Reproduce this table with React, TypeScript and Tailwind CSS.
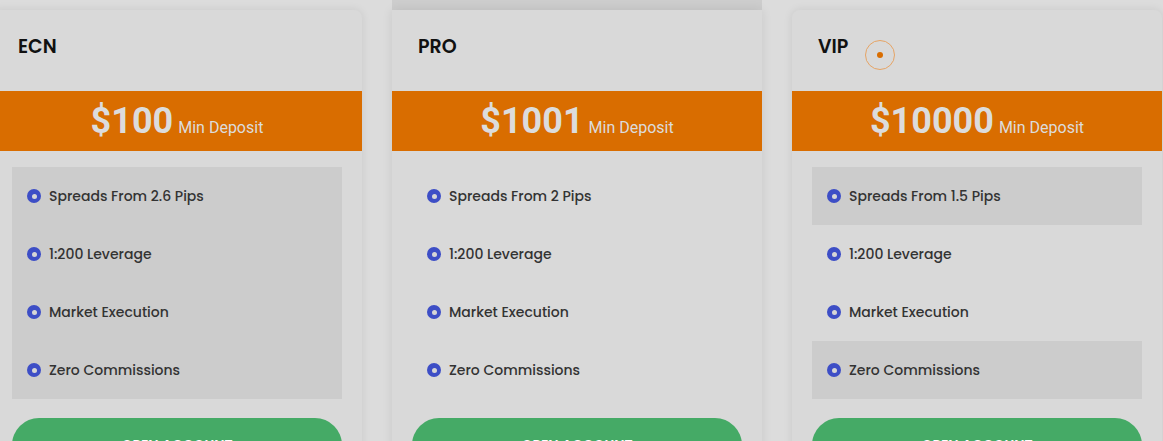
import React from "react";

type Plan = {
  name: string;
  price: string;
  features: string[];
  shaded: boolean[];
  topStrip?: boolean;
  badge?: boolean;
  square?: boolean;
};

const plans: Plan[] = [
  {
    name: "ECN",
    price: "$100",
    features: ["Spreads From 2.6 Pips", "1:200 Leverage", "Market Execution", "Zero Commissions"],
    shaded: [true, true, true, true],
  },
  {
    name: "PRO",
    price: "$1001",
    features: ["Spreads From 2 Pips", "1:200 Leverage", "Market Execution", "Zero Commissions"],
    shaded: [false, false, false, false],
    topStrip: true,
    square: true,
  },
  {
    name: "VIP",
    price: "$10000",
    features: ["Spreads From 1.5 Pips", "1:200 Leverage", "Market Execution", "Zero Commissions"],
    shaded: [true, false, false, true],
    badge: true,
  },
];

const poppins = { fontFamily: "Poppins, Inter, 'Noto Sans', sans-serif" };
const roboto = { fontFamily: "Roboto, 'Liberation Sans', sans-serif" };

function Bullet() {
  return (
    <span className="flex h-[14px] w-[14px] shrink-0 items-center justify-center rounded-full bg-[#3d4ec6]">
      <span className="h-[5px] w-[5px] rounded-full bg-[#d6d6d6]" />
    </span>
  );
}

function PlanCard({ plan }: { plan: Plan }) {
  return (
    <div className="flex w-[370px] shrink-0 flex-col">
      <div className={`h-[10px] ${plan.topStrip ? "bg-[#cdcdcd]" : ""}`} />
      <div
        className={`flex flex-col bg-[#d9d9d9] pb-10 shadow-[0_0_10px_rgba(0,0,0,0.09)] ${
          plan.square ? "" : "rounded-t-[8px]"
        }`}
      >
        {/* header */}
        <div className="flex h-[81px] items-start gap-[17px] pl-[26px] pt-[25px]">
          <h3 style={poppins} className="text-[19px] font-semibold leading-6 text-[#111]">
            {plan.name}
          </h3>
          {plan.badge && (
            <span className="mt-[5px] flex h-[30px] w-[30px] items-center justify-center rounded-full border border-[#e6a465]">
              <span className="h-[6px] w-[6px] rounded-full bg-[#d96d00]" />
            </span>
          )}
        </div>

        {/* price band */}
        <div className="flex h-[60px] items-baseline justify-center gap-[5px] bg-[#d96d00] pt-[8px] text-[#dcdcdc]" style={roboto}>
          <span className="text-[36px] font-bold leading-[44px]">{plan.price}</span>
          <span className="text-[16px] leading-5">Min Deposit</span>
        </div>

        {/* features */}
        <ul className="mx-5 mt-4 flex flex-col">
          {plan.features.map((f, i) => (
            <li
              key={f}
              className={`flex h-[58px] items-center gap-[8px] pl-[15px] ${plan.shaded[i] ? "bg-[#cccccc]" : ""}`}
            >
              <Bullet />
              <span style={poppins} className="text-[14px] font-medium text-[#333]">
                {f}
              </span>
            </li>
          ))}
        </ul>

        <button
          style={poppins}
          className="mx-5 mt-[19px] h-[54px] rounded-full bg-[#45aa66] text-[14px] font-semibold uppercase text-white"
        >
          Open Account
        </button>
      </div>
    </div>
  );
}

export default function App() {
  return (
    <div className="h-[441px] w-[1163px] overflow-hidden bg-[#dcdcdc]">
      <div className="ml-[-8px] flex gap-[30px]">
        {plans.map((p) => (
          <PlanCard key={p.name} plan={p} />
        ))}
      </div>
    </div>
  );
}
